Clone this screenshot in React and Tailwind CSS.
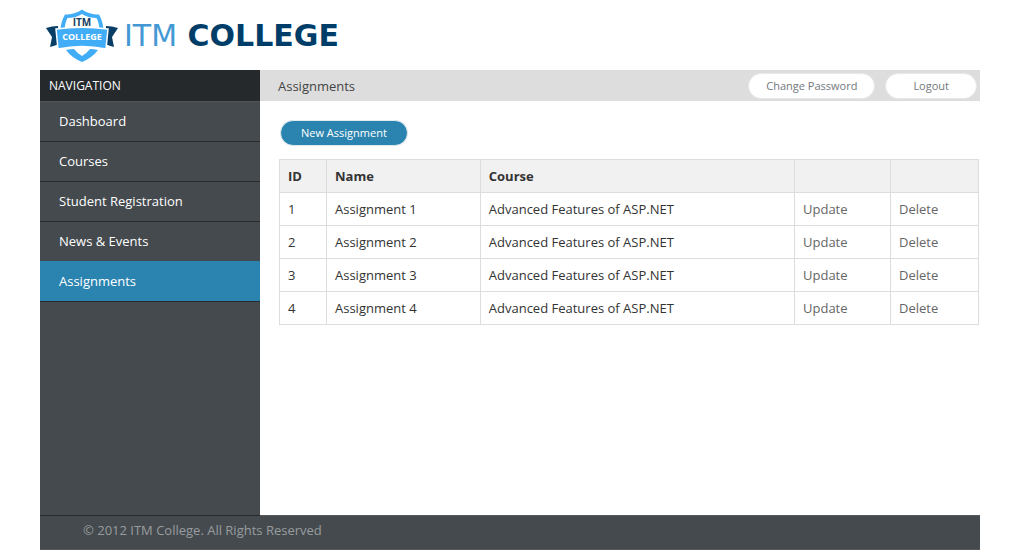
const navItems = ['Dashboard', 'Courses', 'Student Registration', 'News & Events', 'Assignments'];

const assignments = [1, 2, 3, 4].map((id) => ({
  id,
  name: `Assignment ${id}`,
  course: 'Advanced Features of ASP.NET',
}));

function Crest() {
  return (
    <svg width="72" height="56" viewBox="0 0 72 56" aria-hidden="true">
      <path d="M36 1.5 C41 5 46 6.5 53 6.5 C55.5 11 57.5 16 57.5 24 L14.5 24 C14.5 16 16.5 11 19 6.5 C26 6.5 31 5 36 1.5Z" fill="#42adf7" />
      <path d="M36 6 C41 9 46 10 50.5 10 C52.5 14 53.5 18 53.5 24 L18.500 24 C18.500 18 19.500 14 21.500 10 C26 10 31 9 36 6Z" fill="#fff" />
      <path d="M0 20 Q6 18 12 18 L13 36 Q8 38 4 39 L6 29Z" fill="#083e66" />
      <path d="M72 20 Q66 18 60 18 L59 36 Q64 38 68 39 L66 29Z" fill="#083e66" />
      <path d="M10 21 Q36 17.500 62 21 L60 41 Q36 36 12 41Z" fill="#42adf7" stroke="#fff" strokeWidth="1.5" />
      <path d="M20 42 Q24 41 28 41 Q31 45 36 48 Q41 45 44 41 Q48 41 52 42 Q46 50 36 54 Q26 50 20 42Z" fill="#42adf7" />
      <text x="36" y="18" textAnchor="middle" fontSize="10" fontWeight="700" fill="#123d60">ITM</text>
      <text x="36" y="32" textAnchor="middle" fontSize="9" fontWeight="700" fill="#fff">COLLEGE</text>
    </svg>
  );
}

function SideNav() {
  return (
    <aside className="relative -mb-px w-[220px] shrink-0 border-b border-[#272b2e] bg-[#444a4e] text-white">
      <h2 className="flex h-[31px] items-center bg-[#25292c] px-[9px] text-xs">NAVIGATION</h2>
      <nav>
        <ul className="border-b border-[#272b2e]">
          {navItems.map((item) => (
            <li key={item}>
              <a
                href="#"
                aria-current={item === 'Assignments' ? 'page' : undefined}
                className={`flex h-10 items-center border-t px-[19px] text-[13px] ${
                  item === 'Assignments'
                    ? 'border-[#2b84af] bg-[#2b84af]'
                    : item === 'Dashboard'
                      ? 'border-[#505558]'
                      : 'border-[#272b2e]'
                }`}
              >
                {item}
              </a>
            </li>
          ))}
        </ul>
      </nav>
    </aside>
  );
}

export default function App() {
  return (
    <div className="flex min-h-screen flex-col bg-white px-10 font-['Open_Sans',sans-serif] text-[13px] text-[#333]">
      <header className="flex h-[70px] items-center gap-[6px] pt-[2px] pl-[6px]">
        <Crest />
        <h1 className="font-['DejaVu_Sans',sans-serif] text-[30px] font-bold leading-none whitespace-nowrap text-[#003e69]">
          <span className="font-normal text-[#4499d5]">ITM</span> COLLEGE
        </h1>
      </header>
      <div className="flex grow">
        <SideNav />
        <main className="min-w-0 grow">
          <div className="flex h-[31px] items-center gap-[10px] bg-[#ddd] pr-[3px] pl-[18px]">
            <h2 className="grow pt-[2px] text-[13px] text-[#444]">Assignments</h2>
            <button className="h-[26px] rounded-full border border-[#e8e8e8] bg-white px-[17px] pt-[2px] text-[11px] text-[#73787d]">
              Change Password
            </button>
            <button className="h-[26px] rounded-full border border-[#e8e8e8] bg-white px-[27px] pt-[2px] text-[11px] text-[#73787d]">
              Logout
            </button>
          </div>
          <div className="px-[19px] pt-[19px] pr-px">
            <button className="ml-px block h-[26px] rounded-full border border-[#e2eaee] bg-[#2b84af] px-5 text-[11px] text-white">
              New Assignment
            </button>
            <table className="mt-[13px] w-full table-fixed border-collapse text-left">
              <colgroup>
                <col className="w-[47px]" />
                <col className="w-[22%]" />
                <col />
                <col className="w-24" />
                <col className="w-[88px]" />
              </colgroup>
              <thead className="bg-[#f1f1f1]">
                <tr>
                  {['ID', 'Name', 'Course', '', ''].map((label, i) => (
                    <th key={i} className="h-[33px] border border-[#ddd] px-2 pt-[2px] font-bold">{label}</th>
                  ))}
                </tr>
              </thead>
              <tbody>
                {assignments.map(({ id, name, course }) => (
                  <tr key={id}>
                    <td className="h-[33px] border border-[#ddd] px-2 pt-[2px]">{id}</td>
                    <td className="border border-[#ddd] px-2 pt-[2px]">{name}</td>
                    <td className="border border-[#ddd] px-2 pt-[2px]">{course}</td>
                    <td className="border border-[#ddd] px-2 pt-[2px] text-[#666]"><a href="#">Update</a></td>
                    <td className="border border-[#ddd] px-2 pt-[2px] text-[#666]"><a href="#">Delete</a></td>
                  </tr>
                ))}
              </tbody>
            </table>
          </div>
        </main>
      </div>
      <footer className="flex h-[35px] items-center border-y border-[#55595c] bg-[#444a4e] px-[43px] pb-[3px] text-[#999c9e]">
        © 2012 ITM College. All Rights Reserved
      </footer>
    </div>
  );
}
